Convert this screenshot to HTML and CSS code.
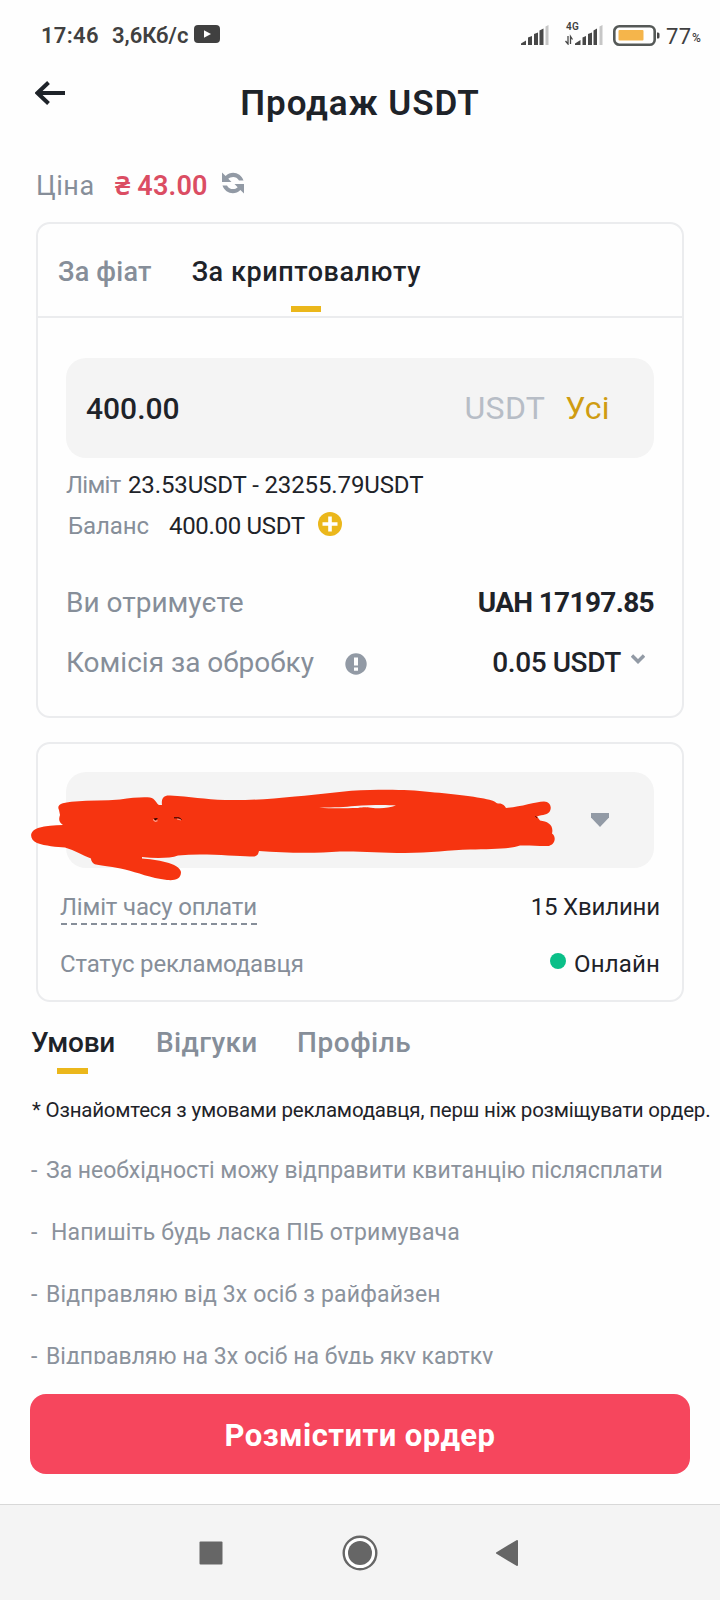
FILE: index.html
```html
<!DOCTYPE html>
<html lang="uk">
<head>
<meta charset="utf-8">
<title>Продаж USDT</title>
<link rel="stylesheet" href="styles.css">
</head>
<body>
<div class="screen">
  <div class="status">
    <span class="clock">17:46</span>
    <span class="speed">3,6Кб/с</span>
    <svg class="yt" width="26" height="18" viewBox="0 0 26 18"><rect width="26" height="18" rx="4" fill="#404040"/><path d="M10 5.200v7.600l7-3.800z" fill="#fff"/></svg>
    <svg class="sig" width="28" height="20" viewBox="0 0 28 20"><g fill="#484848"><path d="M0 20v-1.500L5 15.500V20z"/><path d="M7 20v-7.500l4-1.500v9z"/><path d="M13 20V9l4-1.500V20z"/><path d="M18.500 20V5.500l4-2V20z"/></g><path d="M24.500 20V1.500l3-1.500v20z" fill="#c6c6c6"/></svg>
    <div class="mobile">
      <span class="net">4G</span>
      <svg width="38" height="20" viewBox="0 0 38 20"><path d="M3 11v8L.5 16M5.500 19v-7.500l2 3" fill="none" stroke="#484848" stroke-width="1.300"/><g transform="translate(10 0)"><g fill="#484848"><path d="M0 20v-1.500L5.500 15v5z"/><path d="M7.500 20v-7.500l3.500-1.500v9z"/><path d="M13 20V9l4-1.500V20z"/><path d="M18.500 20V5.500l3.500-2V20z"/></g><path d="M24.500 20V1.500l3-1.500v20z" fill="#c6c6c6"/></g></svg>
    </div>
    <svg class="bat" width="47" height="21" viewBox="0 0 47 21"><rect x="1.300" y="1.300" width="40.400" height="18.400" rx="5" fill="#fff" stroke="#555957" stroke-width="2.600"/><rect x="5.500" y="5" width="25" height="10.500" rx="1" fill="#f5b54b"/><path d="M44 7.500h1a1.500 1.500 0 0 1 1.500 1.500v3a1.500 1.500 0 0 1-1.500 1.500h-1z" fill="#484848"/></svg>
    <span class="pct">77</span><span class="pct-sign">%</span>
  </div>

  <header class="header">
    <svg class="back" width="30" height="24" viewBox="0 0 30 24"><path d="M30 12H3M13.500 1.500L2.500 12l11 10.500" fill="none" stroke="#1e2329" stroke-width="4"/></svg>
    <h1 class="title">Продаж USDT</h1>
  </header>

  <div class="price">
    <span class="price-label">Ціна</span>
    <span class="price-value">₴ 43.00</span>
    <svg class="refresh" width="22" height="22" viewBox="0 0 22 22"><g fill="#929aa5"><path d="M0 .5V10h9.500L6.300 6.800C9 4.200 14.500 3.800 17 8.500h4.500C19 .8 9.500-2 3.600 4z"/><path d="M22 21.500V12h-9.500l3.200 3.200C13 17.800 7.500 18.200 5 13.500H.5C3 21.200 12.500 24 18.400 18z"/></g></svg>
  </div>

  <section class="card trade">
    <nav class="modes">
      <span class="mode">За фіат</span>
      <span class="mode active">За криптовалюту</span>
    </nav>
    <div class="trade-body">
      <div class="field amount">
        <span class="amount-value">400.00</span>
        <span class="unit">USDT</span>
        <span class="all">Усі</span>
      </div>
      <div class="row limit"><span class="muted limit-label">Ліміт</span><span class="limit-value">23.53USDT - 23255.79USDT</span></div>
      <div class="row balance">
        <span class="muted balance-label">Баланс</span><span class="balance-value">400.00 USDT</span>
        <svg class="plus" width="24" height="24" viewBox="0 0 24 24"><circle cx="12" cy="12" r="12" fill="#ebb71b"/><path d="M12 4.500v15M4.500 12h15" stroke="#fff" stroke-width="3.600"/></svg>
      </div>
      <div class="row total receive"><span class="muted">Ви отримуєте</span><b class="receive-value">UAH 17197.85</b></div>
      <div class="row total fee">
        <span class="muted">Комісія за обробку</span>
        <svg class="info" width="22" height="22" viewBox="0 0 22 22"><circle cx="11" cy="11" r="10.700" fill="#929aa5"/><path d="M9 4.500h4v8H9zM9 14.500h4v3.300H9z" fill="#fff"/></svg>
        <span class="fee-value">0.05 USDT</span>
        <svg class="chev" width="14" height="11" viewBox="0 0 14 11"><path d="M1 1.500l6 6 6-6" fill="none" stroke="#929aa5" stroke-width="3.400"/></svg>
      </div>
    </div>
  </section>

  <section class="card seller">
    <div class="field method">
      <svg class="caret" width="18" height="14" viewBox="0 0 18 14"><path d="M0 0h18v4.500L9 14 0 4.500z" fill="#929aa5"/></svg>
    </div>
    <div class="row info-row time"><span class="muted dashed">Ліміт часу оплати</span><span class="time-value">15 Хвилини</span></div>
    <div class="row info-row state"><span class="muted">Статус рекламодавця</span><span class="online"><i class="dot"></i>Онлайн</span></div>
    <svg class="scribble" width="530" height="100" viewBox="30 785 530 100">
      <path fill="#f63410" d="M59 810C56 804 63 802.500 75 801.500C90 800 105 801 120 799.500C132 797.500 143 797 150 797.500C155 798 157 804.500 159 805H162C161 798 164 795 170 795.500C190 796.500 205 799.500 225 800C250 800.500 270 799 295 796.500C320 795 345 790 370 790C395 789.500 412 790 430 792C455 794 480 797 492 800.500C496 802 496 803.500 499 803.500C503 803.500 505 806 506 808C520 807 535 802 544 801.500C550 801.500 552 807 550 811C548 815 543 814.500 537 816.500L540 820.500C548 821.500 554 825 552 833.500C556 836 556 844 549 846C540 846.500 530 845 520 845.500C510 849 490 849 470 849.500C450 850 430 853 405 853C380 853 360 851 340 851.500C315 853.500 285 853 259 851C258 855 257 857 250 856.500C235 856.500 205 853 178 855.500C170 858.500 155 858.500 142 857V858.500C155 859.500 180 863 181 872C181 880 174 880.500 167 880C150 878 138 872.500 125 869.500C113 866.500 103 866 96 864.500C93 864 91 861 91 858.500C83 855.500 75 850.500 65 847.500C57 847 45 846 37 843C29 839 29 831 38 828C46 825.500 54 825.500 63 825C58 822 59 818 60 815Z"/>
      <path fill="#f4f4f4" d="M319 807.700C335 807.500 345 807 355 806C370 805 385 804.500 396 805.500C388 808 382 809 371 807.800C366 807.300 364 807 358 808C340 808.300 330 808.300 319 807.700Z"/>
      <path d="M153.500 818.500l2 2 2.500-2.500z" fill="#200"/><path d="M153 819.500l2 1.800 2.500-.5" fill="none" stroke="#fff" stroke-width=".7"/><path d="M174 817.800h5l2.500 1.700" fill="none" stroke="#200" stroke-width="1"/><path d="M177 819l4 1" fill="none" stroke="#fff" stroke-width=".5"/>
      <path d="M535.500 816.300l1.500 1.500" stroke="#200" stroke-width="1"/>
    </svg>
  </section>

  <nav class="tabs">
    <span class="tab active">Умови</span>
    <span class="tab reviews">Відгуки</span>
    <span class="tab profile">Профіль</span>
  </nav>
  <p class="note">* Ознайомтеся з умовами рекламодавця, перш ніж розміщувати ордер.</p>
  <div class="terms">
    <p class="t1"><span class="dash">-</span>За необхідності можу відправити квитанцію післясплати</p>
    <p class="t2"><span class="dash wide">-</span>Напишіть будь ласка ПІБ отримувача</p>
    <p class="t3"><span class="dash">-</span>Відправляю від 3х осіб з райфайзен</p>
    <p class="t4"><span class="dash">-</span>Відправляю на 3х осіб на будь яку картку</p>
  </div>
  <button class="submit">Розмістити ордер</button>

  <footer class="sysnav">
    <svg class="recent" width="24" height="24" viewBox="0 0 24 24"><rect x=".5" y=".5" width="23" height="23" rx="1" fill="#666"/></svg>
    <svg class="home" width="36" height="36" viewBox="0 0 36 36"><circle cx="18" cy="18" r="16.300" fill="#fff" stroke="#666" stroke-width="2.400"/><circle cx="18" cy="18" r="12" fill="#666"/></svg>
    <svg class="prev" width="24" height="26" viewBox="0 0 24 26"><path d="M22 1L2 13l20 12z" fill="#666" stroke="#666" stroke-width="2" stroke-linejoin="round"/></svg>
  </footer>
</div>
</body>
</html>
```
FILE: styles.css
```css
* { box-sizing: border-box; margin: 0; padding: 0; }
body { background: #fefefe; font-family: Roboto, "Noto Sans", sans-serif; color: #1e2329; }
svg { display: block; flex: none; }
.screen { width: 720px; height: 1600px; overflow: hidden; display: flex; flex-direction: column; white-space: nowrap; }
.screen > * { flex: none; }
.muted { color: #868e99; }

/* Status bar */
.status { display: flex; align-items: flex-start; height: 60px; padding: 25px 0 0 41px; color: #404040; font-size: 22px; font-weight: 600; line-height: 21px; }
.clock { width: 71px; letter-spacing: .3px; }
.speed { width: 82px; letter-spacing: 0; }
.sig { margin-left: 301px; }
.mobile { position: relative; margin-left: 16px; }
.net { position: absolute; left: 1px; top: -4px; font-size: 10px; line-height: 12px; letter-spacing: .2px; }
.bat { margin-left: 10px; }
.pct { margin-left: 6px; width: 26px; font-size: 22px; font-weight: 400; line-height: 23px; letter-spacing: .3px; }
.pct-sign { font-size: 12px; font-weight: 500; line-height: 27px; }

/* Title */
.header { display: flex; justify-content: center; align-items: center; height: 86px; padding-top: 2px; position: relative; }
.back { position: absolute; left: 35px; top: 21px; }
.title { font-size: 35px; font-weight: 600; line-height: 42px; letter-spacing: .9px; }

/* Price */
.price { display: flex; align-items: center; height: 76px; padding: 2px 0 0 36px; font-size: 27px; }
.price-label { width: 79px; padding-top: 2px; color: #868e99; letter-spacing: .5px; }
.price-value { width: 107px; margin-top: -1px; color: #db4d63; font-weight: 600; letter-spacing: .2px; }
.refresh { margin-bottom: 4px; }

.card { width: 648px; margin-left: 36px; border: 2px solid #ebecee; border-radius: 14px; position: relative; }
.field { background: #f4f4f4; border-radius: 20px; display: flex; align-items: center; }
.row { display: flex; align-items: center; height: 40px; font-size: 24px; }

/* Trade card */
.modes { display: flex; height: 94px; border-bottom: 2px solid #ebecee; padding: 2px 0 0 20px; gap: 40px; font-size: 27px; font-weight: 500; line-height: 92px; }
.mode { color: #868e99; letter-spacing: .24px; position: relative; }
.mode.active { color: #1e2329; letter-spacing: .56px; }
.mode.active::after { content: ""; position: absolute; left: 50%; bottom: 4px; width: 30px; height: 6px; margin-left: -15px; background: #ebb71b; }
.trade-body { padding: 40px 28px 24px; }
.amount { height: 100px; padding: 0 44px 0 20px; }
.amount-value { font-size: 30px; font-weight: 500; margin: 1px auto 0 0; }
.unit { font-size: 32px; color: #b7bdc6; letter-spacing: .3px; margin-right: 20px; }
.all { font-size: 32px; color: #cf9c12; letter-spacing: .4px; }
.limit { margin-top: 7px; }
.limit-label { width: 62px; letter-spacing: -.7px; }
.limit-value { letter-spacing: -.12px; }
.balance { margin-top: 1px; }
.balance-label { width: 103px; padding-left: 2px; letter-spacing: -.1px; }
.balance-value { width: 149px; letter-spacing: -.32px; }
.plus { margin-bottom: 4px; }
.total { height: 60px; font-size: 28px; }
.receive { margin-top: 26px; justify-content: space-between; }
.receive-value { letter-spacing: -.66px; }
.info { margin: 4px 0 0 31px; }
.fee-value { margin-left: auto; font-weight: 500; letter-spacing: -.42px; }
.chev { margin: 0 9px 6px 10px; }

/* Seller card */
.seller { margin-top: 24px; padding: 28px 22px 16px; }
.method { height: 96px; margin: 0 6px; padding-right: 45px; justify-content: flex-end; }
.info-row { justify-content: space-between; letter-spacing: -.16px; }
.time { margin-top: 19px; }
.dashed { height: 36px; line-height: 36px; padding-bottom: 0; background: repeating-linear-gradient(90deg, #868e99 0 6px, transparent 6px 10px) 1px 100% / 100% 2px no-repeat; }
.state { margin-top: 17px; }
.online { display: flex; align-items: center; gap: 8px; letter-spacing: .17px; }
.dot { width: 16px; height: 16px; border-radius: 50%; background: #0abf88; margin-bottom: 6px; }
.scribble { position: absolute; left: -8px; top: 41px; }

/* Bottom tabs */
.tabs { display: flex; height: 72px; padding: 21px 0 0 31px; font-size: 28px; font-weight: 500; line-height: 40px; color: #868e99; }
.tab { position: relative; }
.tab.active { width: 125px; color: #1e2329; letter-spacing: -.2px; }
.tab.active::after { content: ""; position: absolute; left: 26px; bottom: 0; width: 31px; height: 6px; background: #ebb71b; }
.reviews { width: 141px; letter-spacing: .4px; }
.profile { letter-spacing: .55px; }

.note { margin: 21px 0 0 32px; font-size: 20.5px; line-height: 30px; letter-spacing: -.2px; }
.terms { margin: 15px 0 0 31px; height: 224px; overflow: hidden; font-size: 23px; line-height: 62px; color: #8b929c; }
.dash { display: inline-block; width: 15px; }
.dash.wide { width: 20px; }
.t1 { letter-spacing: -.02px; }
.t2 { letter-spacing: .14px; }
.t3 { letter-spacing: .16px; }
.t4 { letter-spacing: .02px; }

.submit { width: 660px; height: 80px; margin: 30px 0 30px 30px; padding-top: 3px; border: 0; border-radius: 16px; background: #f6465d; color: #fff; font: 700 31px/77px Roboto, sans-serif; letter-spacing: .43px; }

/* System navigation */
.sysnav { display: flex; align-items: center; justify-content: center; height: 96px; padding-right: 3px; background: #f4f4f4; border-top: 1px solid #d8d8d8; }
.home { margin: 0 117px 0 119px; }
```
